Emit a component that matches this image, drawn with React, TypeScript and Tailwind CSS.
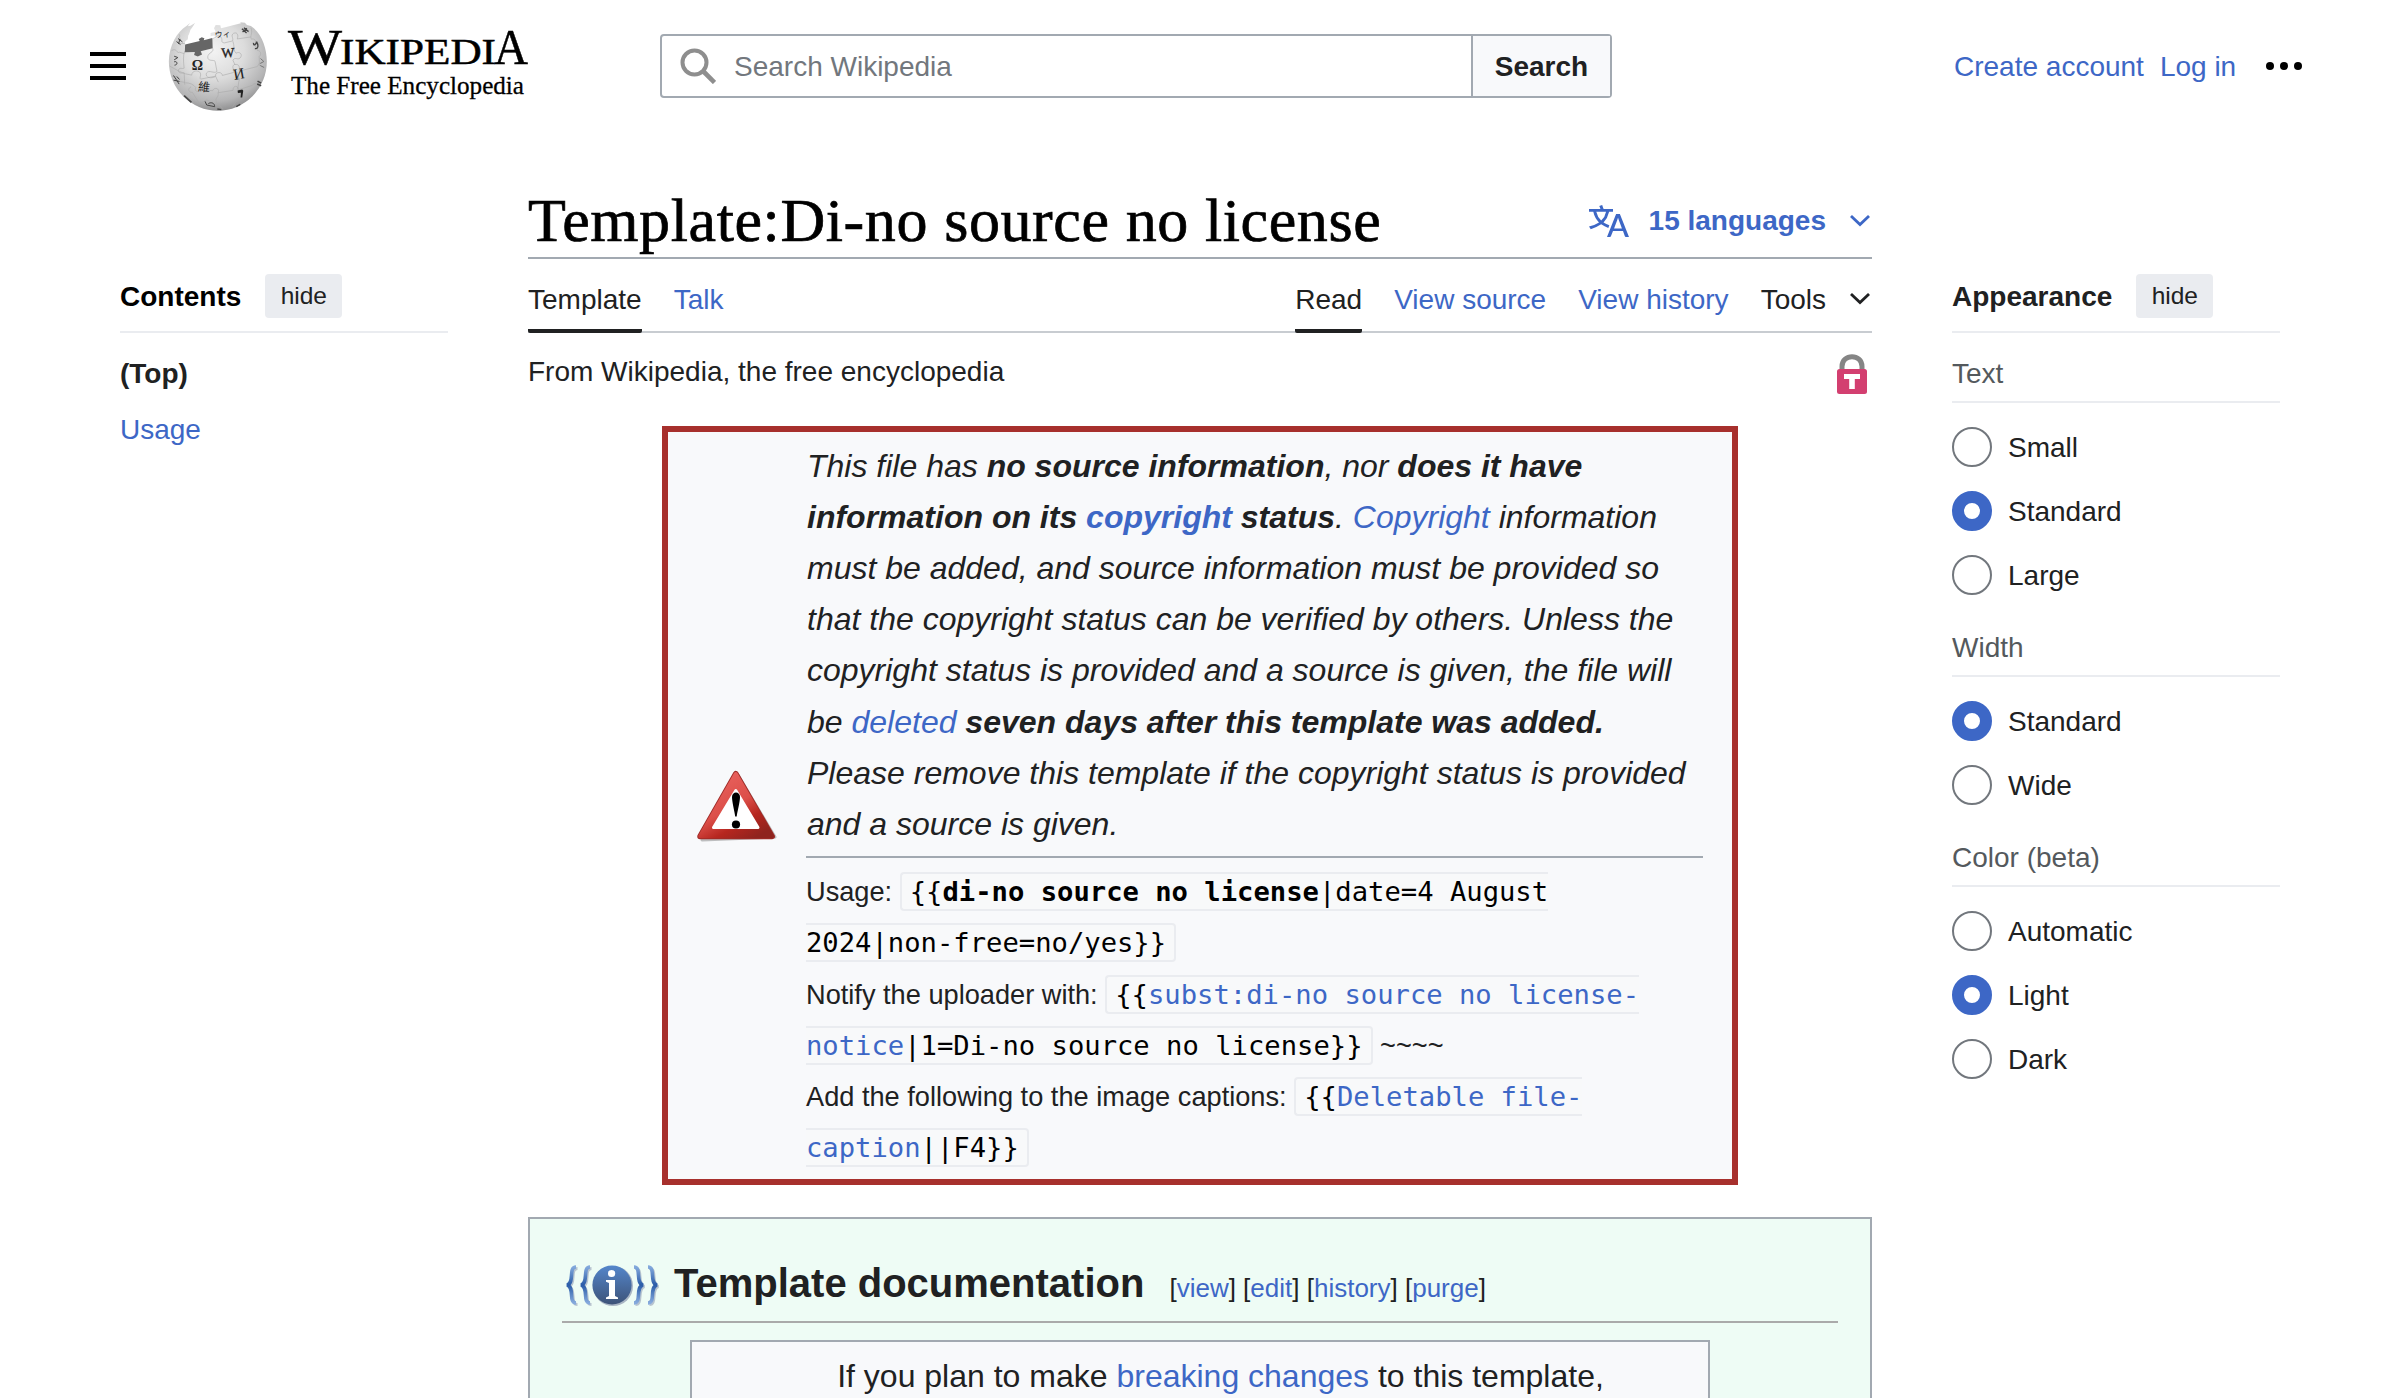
import React from "react";

const link = "text-[#3d67c6]";

function Globe() {
  return (
    <svg viewBox="50 30 306 274" className="h-[91px] w-[102px]" aria-hidden="true">
      <defs>
        <radialGradient id="ball" cx="0.45" cy="0.32" r="0.72">
          <stop offset="0" stopColor="#f3f3f3" />
          <stop offset="0.45" stopColor="#dcdcdc" />
          <stop offset="0.8" stopColor="#b4b4b5" />
          <stop offset="1" stopColor="#858586" />
        </radialGradient>
      </defs>
      <path
        d="M119 36 L112 46 L120 44 L134 36 L130 48 L120 56 L122 66 L114 74 L113 84 L104 92 L103 120 L132 121 L130 131 L141 137 L153 130 L150 121 L186 112 L185 84 L196 82 L192 74 L180 76 L180 66 L196 62 L191 52 L196 42 L210 43 L212 52 L228 48 L248 43 L272 37 L270 34 L284 35 L290 42 L302 45 C334 66 350 110 350 152 A147.5 148 0 0 1 55 152 C55 105 80 62 108 45 Z"
        fill="url(#ball)"
      />
      <path d="M119 33 L134 36 L120 58 L114 74 L112 85 L145 76 L152 66 L180 76 L180 66 L188 40 L186 30 Z" fill="#fff" />
      <path d="M104 101 L148 90 L145 84 L154 79 L162 82 L160 88 L186 81 L187 112 L151 121 L155 131 L142 137 L131 132 L133 123 L103 124 Z" fill="#666" />
      <g fill="none" stroke="#a9a9a9" strokeWidth="1.8">
        <path d="M187 83 C202 78 199 70 211 78 C220 85 208 94 222 96 L247 90 C250 80 240 74 250 67 C264 61 264 78 261 84 L302 78" />
        <path d="M103 120 C97 136 99 151 101 172 C94 175 88 169 84 177 C81 187 94 188 101 186 L103 222" />
        <path d="M187 112 C192 126 174 123 172 138 C172 153 190 146 194 151 L200 182 C190 190 177 175 168 187 C164 202 183 204 196 197 L204 214" />
        <path d="M248 91 C253 105 249 121 257 127 C269 120 279 132 269 142 C260 148 255 137 248 148 L254 162" />
        <path d="M58 166 C79 177 96 190 124 193 C123 183 136 177 147 183 C156 192 145 200 151 205 L196 196 C192 183 216 181 216 194 L250 185 C253 173 242 170 252 161 C270 158 268 173 267 181 L318 168 C327 168 321 155 335 156" />
        <path d="M105 216 C119 216 130 222 136 230 C130 244 146 246 151 236 L187 240 C191 227 211 234 203 246 L248 239 C249 222 263 224 265 237 L306 224 C315 213 324 221 327 224" />
        <path d="M261 184 C256 198 273 201 266 211 L262 236" />
        <path d="M122 228 C109 235 116 246 126 245 L148 280 C157 276 165 263 177 271 M203 246 C207 262 191 260 199 276 L218 294 M265 238 C258 253 277 252 270 266 C256 266 254 281 247 288" />
        <path d="M302 51 C309 64 298 76 304 85 C313 80 321 93 313 100 L322 119 C330 118 336 130 327 137 L328 165" />
        <path d="M86 70 C93 81 77 88 84 97 L103 98 M63 119 C80 110 78 129 87 124 L101 128 M65 197 C83 193 76 213 88 212 L104 215" />
      </g>
      <g fill="#222" fontFamily="'Liberation Serif', 'Noto Sans CJK JP', serif" textAnchor="middle">
        <text x="141" y="177" fontSize="45" fontWeight="bold" textLength="34" lengthAdjust="spacingAndGlyphs">Ω</text>
        <text x="233" y="139" fontSize="41" textLength="40" lengthAdjust="spacingAndGlyphs" stroke="#222" transform="rotate(-3 233 125)">W</text>
        <text x="266" y="205" fontSize="47" transform="rotate(-10 265 189)">И</text>
        <text x="161" y="242" fontSize="36" fontFamily="'Noto Sans CJK TC', sans-serif" transform="rotate(5 161 229)">維</text>
        <text x="217" y="79" fontSize="24" fontFamily="'Noto Sans CJK JP', sans-serif" transform="rotate(-6 217 68)">ウィ</text>
        <path d="M262 239 L276 236 L279 240 L276 260 L271 260 L272 246 L263 247 Z" />
      </g>
      <g fill="none" stroke="#444" strokeWidth="4">
        <path d="M275 53 L289 66 M281 50 L295 62 M277 63 L290 52" />
        <path d="M310 96 C309 108 320 99 319 92 C326 104 324 115 314 113" />
        <path d="M83 83 L96 93 M78 92 L90 101 M89 84 L84 99" strokeWidth="3" />
        <path d="M71 136 L82 140 L71 147 M71 153 C80 149 84 162 72 163" strokeWidth="3" />
        <path d="M69 194 L86 220 M69 208 L87 212 M79 197 L87 206" strokeWidth="3" />
        <path d="M331 143 L341 152 L330 158 M330 164 L342 170" strokeWidth="3" stroke="#777" />
        <path d="M322 211 L333 217 M321 220 L333 225" strokeWidth="5" />
        <path d="M164 272 L169 283 L193 288 C193 275 180 274 174 279" strokeWidth="3" />
        <path d="M101 255 L123 275" strokeWidth="5" />
        <path d="M201 295 L213 297 M258 288 L270 281" strokeWidth="4" />
      </g>
    </svg>
  );
}

function Wordmark() {
  return (
    <svg viewBox="-4 -18 254 96" className="h-24 w-[254px]" fill="#000" fontFamily="'Liberation Serif', serif" role="img">
      <g stroke="#000" strokeWidth="0.5">
        <text x="0" y="38" fontSize="51" textLength="54" lengthAdjust="spacingAndGlyphs">W</text>
        <text x="52" y="38" fontSize="36.5" textLength="156" lengthAdjust="spacingAndGlyphs">IKIPEDI</text>
        <text x="206" y="38" fontSize="51" textLength="34" lengthAdjust="spacingAndGlyphs">A</text>
      </g>
      <text x="3" y="67.5" fontSize="26" stroke="#000" strokeWidth="0.3" textLength="233" lengthAdjust="spacingAndGlyphs">The Free Encyclopedia</text>
    </svg>
  );
}

function Chevron({ className }: { className?: string }) {
  return (
    <svg viewBox="0 0 20 12" className={`h-3 w-5 ${className ?? ""}`} fill="none" stroke="currentColor" strokeWidth="2.8">
      <path d="M1 1 L10 9.6 L19 1" />
    </svg>
  );
}

function Header() {
  return (
    <header className="flex h-[132px] items-center">
      <button className="ml-[90px] flex w-9 flex-col gap-2" aria-label="Main menu">
        <span className="h-1 w-full bg-black" />
        <span className="h-1 w-full bg-black" />
        <span className="h-1 w-full bg-black" />
      </button>
      <div className="ml-[41px] flex items-start">
        <Globe />
        <div className="-mt-[13px] ml-[15px] h-[104px]">
          <Wordmark />
        </div>
      </div>
      <form className="ml-[122px] flex h-16 w-[952px] rounded-[4px] border-2 border-[#a2a9b1]">
        <div className="flex flex-1 items-center">
          <svg viewBox="0 0 36 36" className="ml-[18px] size-9" fill="none" stroke="#8e8e8e" strokeWidth="4">
            <circle cx="14.5" cy="14.5" r="12" />
            <path d="M23 23 L34.5 34.5" strokeWidth="4.6" />
          </svg>
          <span className="mt-px ml-[18px] text-[#72777d]">Search Wikipedia</span>
        </div>
        <div className="flex w-[139px] items-center justify-center border-l-2 border-[#a2a9b1] bg-[#f8f9fb] pt-px font-bold">
          Search
        </div>
      </form>
      <nav className={`ml-[342px] flex items-center ${link}`}>
        <a className="mt-px">Create account</a>
        <a className="mt-px ml-4">Log in</a>
        <svg viewBox="0 0 36 8" className="ml-[30px] h-2 w-9 fill-black">
          <circle cx="4" cy="4" r="4" />
          <circle cx="18" cy="4" r="4" />
          <circle cx="32" cy="4" r="4" />
        </svg>
      </nav>
    </header>
  );
}

function PanelTitle({ children, className }: { children: string; className?: string }) {
  return (
    <div className="flex h-[72px] items-center border-b-2 border-[#eaecf0]">
      <span className={`mt-px font-bold ${className ?? ""}`}>{children}</span>
      <button className="ml-6 h-11 w-[77px] rounded-[4px] bg-[#eaecf0] text-[24.5px]">hide</button>
    </div>
  );
}

function Options({ title, items, selected }: { title: string; items: string[]; selected: string }) {
  return (
    <section>
      <h3 className="mt-5 flex h-[50px] items-center border-b-2 border-[#eaecf0] pb-[7px] text-[#54595d]">{title}</h3>
      <div className="mt-3">
        {items.map((item) => (
          <label key={item} className="flex h-16 items-center gap-4">
            <span
              className={
                item === selected
                  ? "size-10 rounded-full border-[12px] border-[#3d67c6] bg-white"
                  : "size-10 rounded-full border-2 border-[#72777d] bg-white"
              }
            />
            <span className="pt-px">{item}</span>
          </label>
        ))}
      </div>
    </section>
  );
}

function WarningIcon() {
  return (
    <svg viewBox="0 0 80 72" className="h-[72px] w-20">
      <defs>
        <linearGradient id="warn" x1="0.2" y1="0.1" x2="0.8" y2="1">
          <stop offset="0" stopColor="#e8605c" />
          <stop offset="0.45" stopColor="#dc4f49" />
          <stop offset="0.72" stopColor="#b6261f" />
          <stop offset="1" stopColor="#8f231e" />
        </linearGradient>
      </defs>
      <path d="M41 5 L78 67 L5 70 Z" fill="#777" stroke="#777" strokeWidth="3" strokeLinejoin="round" opacity="0.45" />
      <path d="M38.8 3.6 L75.2 66.4 H3 Z" fill="url(#warn)" stroke="#9e2b27" strokeWidth="5.5" strokeLinejoin="round" />
      <path d="M38.8 4 L75 66.2 H3.2 Z" fill="url(#warn)" stroke="url(#warn)" strokeWidth="4" strokeLinejoin="round" />
      <path d="M38.8 20.5 L61 57.5 H16.5 Z" fill="#fff" stroke="#fff" strokeWidth="3" strokeLinejoin="round" />
      <path d="M35 27 C35 21 43 21 43 27 C43 32 40.2 42 39.7 46.5 H38.2 C37.7 42 35 32 35 27 Z" fill="#000" />
      <circle cx="39" cy="54.5" r="4.1" fill="#000" />
    </svg>
  );
}

function LockIcon() {
  return (
    <svg viewBox="0 0 30 40" className="mr-[5px] h-10 w-[30px]">
      <path d="M5 18 V12.5 C5 -0.5 25 -0.5 25 12.5 V18" fill="none" stroke="#858585" strokeWidth="5" />
      <rect x="0" y="15" width="30" height="25" rx="2.5" fill="#d33f70" />
      <path d="M7 20 H23 V25 H17.8 V35 H12.2 V25 H7 Z" fill="#fff" />
    </svg>
  );
}

function DocIcon() {
  return (
    <svg viewBox="0 0 94 42" className="h-[42px] w-[94px]">
      <defs>
        <linearGradient id="brace" x1="0" y1="0" x2="0" y2="1">
          <stop offset="0" stopColor="#82a8dc" />
          <stop offset="0.5" stopColor="#2a5ca8" />
          <stop offset="1" stopColor="#86aadd" />
        </linearGradient>
        <linearGradient id="disc" x1="0" y1="0" x2="0" y2="1">
          <stop offset="0" stopColor="#5486cb" />
          <stop offset="1" stopColor="#3d5378" />
        </linearGradient>
      </defs>
      <g fill="none" stroke="#b8c4cf" strokeWidth="3" transform="translate(1.5 1.5)">
        <path d="M10 2 C2 2 9 18 1 20 C9 22 2 38 10 38 M24 2 C16 2 23 18 15 20 C23 22 16 38 24 38 M68 2 C76 2 69 18 77 20 C69 22 76 38 68 38 M82 2 C90 2 83 18 91 20 C83 22 90 38 82 38" />
      </g>
      <g fill="none" stroke="url(#brace)" strokeWidth="3.6">
        <path d="M10 2 C2 2 9 18 1 20 C9 22 2 38 10 38" />
        <path d="M24 2 C16 2 23 18 15 20 C23 22 16 38 24 38" />
        <path d="M68 2 C76 2 69 18 77 20 C69 22 76 38 68 38" />
        <path d="M82 2 C90 2 83 18 91 20 C83 22 90 38 82 38" />
      </g>
      <circle cx="47" cy="21" r="20" fill="#a9b5c4" />
      <circle cx="46" cy="20" r="19.6" fill="url(#disc)" />
      <circle cx="45.6" cy="8.5" r="3.6" fill="#fff" />
      <path d="M40 15 H49 V31 L52 32.5 V34 H40 V32.5 L43 31 V18 L40 16.8 Z" fill="#fff" />
    </svg>
  );
}

function Code({ children }: { children: React.ReactNode }) {
  return (
    <code className="rounded-[4px] border-2 border-[#eaecf0] bg-[#f8f9fa] px-2 py-[2px] font-['DejaVu_Sans_Mono',monospace] text-black">
      {children}
    </code>
  );
}

function Warning() {
  return (
    <div className="mx-auto flex h-[759px] w-[1076px] items-center border-[6px] border-[#a7302d] bg-[#f8f9fb]">
      <div className="ml-[29px] w-20 shrink-0">
        <WarningIcon />
      </div>
      <div className="ml-[29px] w-[897px] pt-[3px] whitespace-nowrap">
        <p className="pl-px text-[32px] leading-[51.2px] italic">
          This file has <b>no source information</b>, nor <b>does it have</b>
          <br />
          <b>
            information on its <a className={link}>copyright</a> status
          </b>
          . <a className={link}>Copyright</a> information
          <br />
          must be added, and source information must be provided so
          <br />
          that the copyright status can be verified by others. Unless the
          <br />
          copyright status is provided and a source is given, the file will
          <br />
          be <a className={link}>deleted</a> <b>seven days after this template was added.</b>
          <br />
          Please remove this template if the copyright status is provided
          <br />
          and a source is given.
        </p>
        <div className="mt-[6px] mb-2 h-[2px] bg-[#a2a9b1]" />
        <p className="text-[27.2px] leading-[51.2px]">
          Usage:{" "}
          <Code>
            {"{{"}
            <b>di-no source no license</b>|date=4 August
            <br />
            {"2024|non-free=no/yes}}"}
          </Code>
          <br />
          Notify the uploader with:{" "}
          <Code>
            {"{{"}
            <a className={link}>
              subst:di-no source no license-
              <br />
              notice
            </a>
            {"|1=Di-no source no license}}"}
          </Code>{" "}
          ~~~~
          <br />
          Add the following to the image captions:{" "}
          <Code>
            {"{{"}
            <a className={link}>
              Deletable file-
              <br />
              caption
            </a>
            {"||F4}}"}
          </Code>
        </p>
      </div>
    </div>
  );
}

function Documentation() {
  return (
    <section className="mt-8 h-[300px] border-2 border-[#a2a9b1] bg-[#eefcf5] px-8">
      <div className="flex h-[104px] items-baseline border-b-2 border-[#aaa] pt-[38px]">
        <div className="ml-[4px] self-start pt-2">
          <DocIcon />
        </div>
        <h2 className="ml-[14px] text-[40px] leading-[52px] font-bold whitespace-nowrap">Template documentation</h2>
        <span className="ml-[25px] text-[26px] whitespace-nowrap">
          [<a className={link}>view</a>] [<a className={link}>edit</a>] [<a className={link}>history</a>] [
          <a className={link}>purge</a>]
        </span>
      </div>
      <div className="mx-auto mt-[17px] h-[200px] w-[1020px] border-2 border-[#a2a9b1] bg-[#f8f9fb] pt-[9px] pl-[41px] text-center text-[32px] leading-[51.2px]">
        If you plan to make <a className={link}>breaking changes</a> to this template,
      </div>
    </section>
  );
}

function Tab({ children, active }: { children: string; active?: boolean }) {
  return (
    <a
      className={
        active
          ? "flex h-[74px] items-center rounded-b-[2px] border-b-4 border-[#202122] pt-3"
          : "flex h-[74px] items-center border-b-4 border-transparent pt-3 text-[#3d67c6]"
      }
    >
      {children}
    </a>
  );
}

export default function App() {
  return (
    <div className="h-[1398px] w-[2400px] overflow-hidden bg-white font-['Liberation_Sans',sans-serif] text-[28px] leading-[44px] text-[#202122]">
      <Header />
      <div className="flex items-start">
        <aside className="ml-[120px] w-[328px] shrink-0 pt-[129px]">
          <PanelTitle className="text-black">Contents</PanelTitle>
          <ul className="mt-[13px]">
            <li className="flex h-14 items-center font-bold">(Top)</li>
            <li className={`flex h-14 items-center ${link}`}>Usage</li>
          </ul>
        </aside>

        <main className="ml-20 w-[1344px] shrink-0">
          <div className="flex h-[127px] items-end justify-between border-b-2 border-[#a2a9b1]">
            <h1 className="pb-px font-['Liberation_Serif',serif] text-[62px] leading-[72px] tracking-[0.6px] whitespace-nowrap text-black [-webkit-text-stroke:0.7px_black]">
              Template:Di-no source no license
            </h1>
            <div className={`mb-[14px] flex items-center font-bold ${link}`}>
              <svg viewBox="0 0 20 20" className="size-10" fill="currentColor">
                <path d="M20 18h-1.44a.6.6 0 0 1-.4-.12.8.8 0 0 1-.23-.31L17 15h-5l-1 2.54a.8.8 0 0 1-.22.3.6.6 0 0 1-.4.14H9l4.55-11.47h1.89zm-3.53-4.31L14.89 9.5a12 12 0 0 1-.39-1.24q-.09.37-.19.69l-.19.56-1.58 4.19zm-6.3-1.58a13.4 13.4 0 0 1-2.91-1.41 11.46 11.46 0 0 0 2.81-5.37H12V4H7.31a4 4 0 0 0-.2-.56C6.87 2.79 6.6 2 6.6 2l-1.47.5s.4.89.6 1.5H0v1.33h2.15A11.23 11.23 0 0 0 5 10.7a17.2 17.2 0 0 1-5 2.1q.56.82.87 1.38a23.3 23.3 0 0 0 5.22-2.51 15.6 15.6 0 0 0 3.56 1.77zM3.63 5.33h4.91a8.1 8.1 0 0 1-2.45 4.45 9.1 9.1 0 0 1-2.46-4.45" />
              </svg>
              <span className="mt-px ml-5">15 languages</span>
              <Chevron className="mr-[2px] ml-6" />
            </div>
          </div>
          <nav className="flex h-[74px] items-start gap-8 border-b-2 border-[#c8ccd1]">
            <Tab active>Template</Tab>
            <Tab>Talk</Tab>
            <div className="ml-auto flex gap-8">
              <Tab active>Read</Tab>
              <Tab>View source</Tab>
              <Tab>View history</Tab>
              <span className="flex h-[74px] items-center pt-2">
                Tools
                <Chevron className="mr-[2px] ml-6 -translate-y-px" />
              </span>
            </div>
          </nav>
          <div className="mb-4 flex h-[77px] items-center justify-between">
            <span>From Wikipedia, the free encyclopedia</span>
            <div className="pt-[5px]">
              <LockIcon />
            </div>
          </div>
          <Warning />
          <Documentation />
        </main>

        <aside className="ml-20 w-[328px] shrink-0 pt-[129px]">
          <PanelTitle>Appearance</PanelTitle>
          <Options title="Text" items={["Small", "Standard", "Large"]} selected="Standard" />
          <Options title="Width" items={["Standard", "Wide"]} selected="Standard" />
          <Options title="Color (beta)" items={["Automatic", "Light", "Dark"]} selected="Light" />
        </aside>
      </div>
    </div>
  );
}
